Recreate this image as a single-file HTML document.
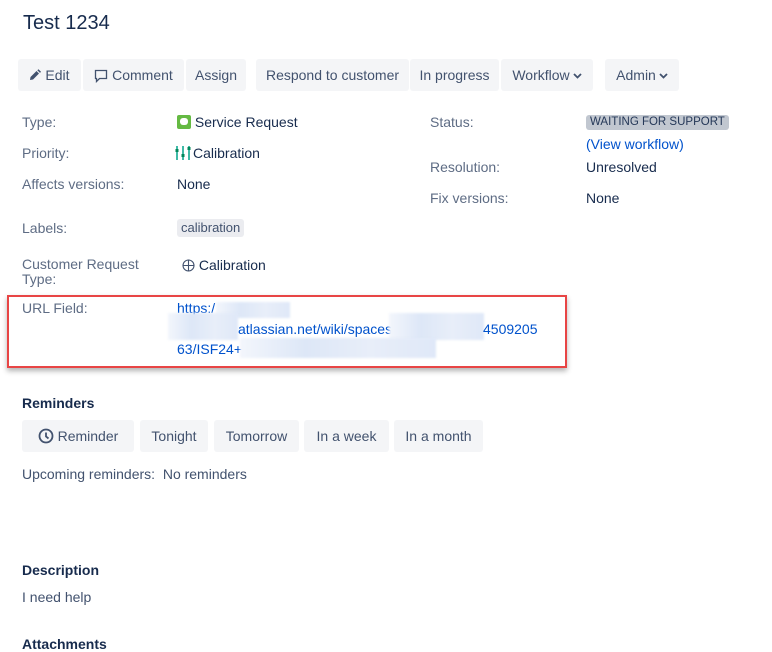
<!DOCTYPE html>
<html><head><meta charset="utf-8"><style>
body{margin:0;width:772px;height:644px;overflow:hidden;background:#fff;font-family:"Liberation Sans",sans-serif;font-size:14px;color:#172b4d;position:relative}
.a{position:absolute;white-space:nowrap}
.lb{color:#5e6c84}
.btn{position:absolute;top:59px;height:32px;background:#f4f5f7;border-radius:3px;color:#42526e;line-height:32px;text-align:center;font-size:14px}
.rb{position:absolute;top:420px;height:32px;background:#f4f5f7;border-radius:3px;color:#42526e;line-height:32px;text-align:center;font-size:14px}
.lnk{color:#0052cc}
.blur{position:absolute;background:linear-gradient(90deg,#f3f6fc,#dde7f7,#e8eef9,#dfe8f8);filter:blur(1px)}
.chev{vertical-align:1px;margin-left:3px}
</style></head><body>
<div class="a" style="left:23px;top:12px;font-size:20px;color:#172b4d">Test 1234</div>

<div class="btn" style="left:18px;width:63px"><svg width="12" height="12" viewBox="0 0 12 12" style="vertical-align:-1px"><path d="M1 11l0.5-3 6-6 2.5 2.5-6 6z M8.3 1.2l1.2-1 2.5 2.5-1 1.2z" fill="#42526e"/></svg> Edit</div>
<div class="btn" style="left:83px;width:101px"><svg width="14" height="14" viewBox="0 0 14 14" style="vertical-align:-3px"><path d="M1.5 1.5h11v8h-7l-3 3v-3h-1z" fill="none" stroke="#42526e" stroke-width="1.3"/></svg> Comment</div>
<div class="btn" style="left:186px;width:60px">Assign</div>
<div class="btn" style="left:256px;width:153px">Respond to customer</div>
<div class="btn" style="left:410px;width:89px">In progress</div>
<div class="btn" style="left:501px;width:92px">Workflow<svg class="chev" width="9" height="6" viewBox="0 0 9 6"><path d="M1 1l3.5 3.5L8 1" fill="none" stroke="#42526e" stroke-width="1.8"/></svg></div>
<div class="btn" style="left:605px;width:74px">Admin<svg class="chev" width="9" height="6" viewBox="0 0 9 6"><path d="M1 1l3.5 3.5L8 1" fill="none" stroke="#42526e" stroke-width="1.8"/></svg></div>

<div class="a lb" style="left:22px;top:114px">Type:</div>
<div class="a" style="left:177px;top:114px"><span style="display:inline-block;width:14px;height:14px;background:#65ba43;border-radius:2px;vertical-align:-2px;position:relative"><span style="position:absolute;left:3px;top:3px;width:8px;height:7px;background:#fff;border-radius:3px"></span></span> Service Request</div>
<div class="a lb" style="left:22px;top:145px">Priority:</div>
<div class="a" style="left:175px;top:145px"><svg width="18" height="16" viewBox="0 0 18 16" style="vertical-align:-3px"><g stroke="#00a38a" stroke-width="1.5"><path d="M2 1v14M8 1v14M14 1v14"/></g><g fill="#00875a"><rect x="0.5" y="4" width="3" height="3"/><rect x="6.5" y="9" width="3" height="3"/><rect x="12.5" y="2" width="3" height="3"/></g></svg>Calibration</div>
<div class="a lb" style="left:22px;top:176px">Affects versions:</div>
<div class="a" style="left:177px;top:176px">None</div>
<div class="a lb" style="left:22px;top:220px">Labels:</div>
<div class="a" style="left:177px;top:219px;background:#ebecf0;color:#42526e;font-size:13px;padding:0 4px;border-radius:3px;line-height:18px">calibration</div>
<div class="a lb" style="left:22px;top:257px;line-height:15px">Customer Request<br>Type:</div>
<div class="a" style="left:182px;top:257px"><svg width="13" height="13" viewBox="0 0 13 13" style="vertical-align:-2px"><circle cx="6.5" cy="6.5" r="5.5" fill="none" stroke="#42526e" stroke-width="1.1"/><path d="M6.5 0.5v12M0.5 6.5h12" stroke="#42526e" stroke-width="1.1"/></svg> Calibration</div>

<div class="a lb" style="left:430px;top:114px">Status:</div>
<div class="a" style="left:586px;top:115px;background:#c1c7d0;color:#253858;font-size:11.5px;line-height:15px;padding:0 4px;border-radius:3px">WAITING FOR SUPPORT</div>
<div class="a lnk" style="left:586px;top:136px">(View workflow)</div>
<div class="a lb" style="left:430px;top:159px">Resolution:</div>
<div class="a" style="left:586px;top:159px">Unresolved</div>
<div class="a lb" style="left:430px;top:190px">Fix versions:</div>
<div class="a" style="left:586px;top:190px">None</div>

<div class="a" style="left:7px;top:295px;width:556px;height:69px;border:2.5px solid #e84545;box-shadow:0 3px 5px rgba(0,0,0,0.3)"></div>
<div class="a lb" style="left:22px;top:300px">URL Field:</div>
<div class="a lnk" style="left:177px;top:300px">https:/</div>
<div class="blur" style="left:216px;top:302px;width:74px;height:16px"></div>
<div class="blur" style="left:168px;top:313px;width:70px;height:27px"></div>
<div class="a lnk" style="left:238px;top:321px">atlassian.net/wiki/spaces</div>
<div class="blur" style="left:389px;top:313px;width:95px;height:27px"></div>
<div class="a lnk" style="left:483px;top:321px">4509205</div>
<div class="a lnk" style="left:177px;top:341px">63/ISF24+</div>
<div class="blur" style="left:240px;top:338px;width:196px;height:20px"></div>

<div class="a" style="left:22px;top:395px;font-weight:bold">Reminders</div>
<div class="rb" style="left:22px;width:112px"><svg width="16" height="16" viewBox="0 0 16 16" style="vertical-align:-3px"><circle cx="8" cy="8" r="6.5" fill="none" stroke="#42526e" stroke-width="1.8"/><path d="M8 4.5v4l2.5 2" fill="none" stroke="#42526e" stroke-width="1.8"/></svg> Reminder</div>
<div class="rb" style="left:140px;width:68px">Tonight</div>
<div class="rb" style="left:214px;width:85px">Tomorrow</div>
<div class="rb" style="left:304px;width:85px">In a week</div>
<div class="rb" style="left:394px;width:89px">In a month</div>
<div class="a" style="left:22px;top:466px;color:#42526e">Upcoming reminders:&nbsp; No reminders</div>

<div class="a" style="left:22px;top:562px;font-weight:bold">Description</div>
<div class="a" style="left:22px;top:589px;color:#42526e">I need help</div>
<div class="a" style="left:22px;top:636px;font-weight:bold">Attachments</div>
</body></html>
